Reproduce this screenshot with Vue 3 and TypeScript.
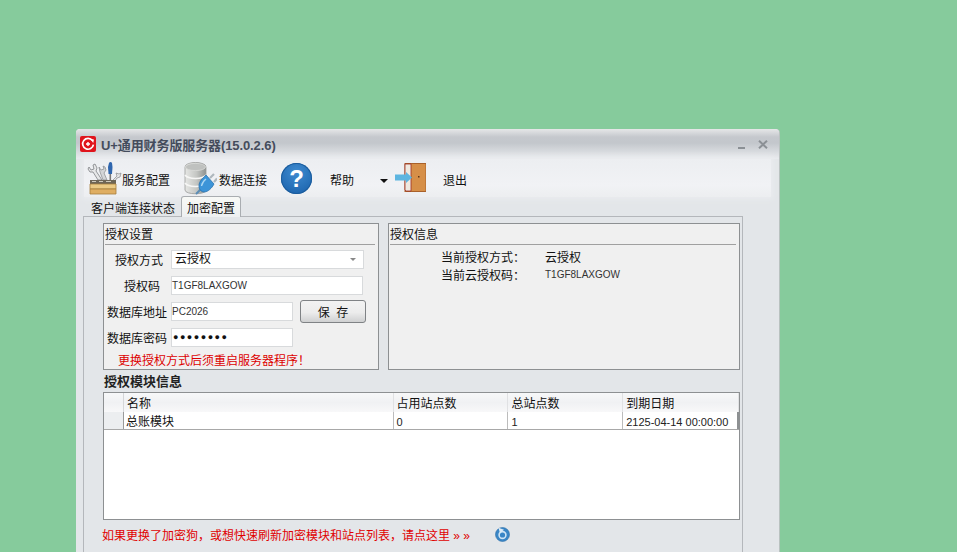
<script setup lang="ts">
interface Field {
  label: string
  value: string
}

const infoRows: Field[] = [
  { label: '当前授权方式：', value: '云授权' },
  { label: '当前云授权码：', value: 'T1GF8LAXGOW' }
]

const columns = [
  { title: '名称', width: 270 },
  { title: '占用站点数', width: 115 },
  { title: '总站点数', width: 115 },
  { title: '到期日期', width: 116 }
]

const rows = [['总账模块', '0', '1', '2125-04-14 00:00:00']]
</script>

<template>
  <div class="page">
    <div class="window">
      <div class="titlebar">
        <svg class="app-icon" viewBox="0 0 16 16">
          <rect width="16" height="16" rx="2" fill="#e0141c" />
          <path d="M12.4 4.6A5.4 5.4 0 1 0 13.4 8.6" fill="none" stroke="#fff" stroke-width="1.7" />
          <path d="M10.6 3.2 14 3.4 13.2 7z" fill="#fff" />
          <path d="M6 8h4M8 6v4" stroke="#fff" stroke-width="1.4" />
        </svg>
        <span class="title">U+通用财务版服务器(15.0.2.6)</span>
        <span class="win-min"></span>
        <svg class="win-close" viewBox="0 0 10 9">
          <path d="M1 .8l8 7.4M9 .8 1 8.2" stroke="#8b9095" stroke-width="2" />
        </svg>
      </div>

      <div class="toolbar">
        <button class="tool tool-service">
          <svg class="tool-icon" width="36" height="34" viewBox="0 0 36 34">
            <!-- 左侧扳手 -->
            <path d="M3 6 5 9 8 8 7 4 9 3 11 7 10 10 16 19H12L7 11 4 11 2 8z" fill="#e6e7e8" stroke="#7d8084" stroke-width=".8" />
            <path d="M13 6 15 9 18 8 17 5 19 6 20 9 18 12 21 19H17L14 11z" fill="#d3d5d7" stroke="#85888b" stroke-width=".7" />
            <!-- 螺丝刀 -->
            <path d="M22.5 13 22 6 23 2C23.6.6 25.4.6 26 2L26.5 6 26 13z" fill="#2f66ae" />
            <path d="M23.5 13h1.6v7h-1.6z" fill="#777" />
            <!-- 右侧扳手 -->
            <path d="M26 20 31 15 30 12 33 13 35 12 34 16 31 17 29 20z" fill="#e4e5e6" stroke="#85878a" stroke-width=".7" />
            <!-- 工具箱 -->
            <rect x="4" y="19" width="26" height="4" fill="#6e6656" />
            <path d="M6 20.5h4M13 20.5h4M20 20.5h5" stroke="#cfcabb" stroke-width="1.2" />
            <path d="M4 23h26v5H4z" fill="#eccb85" stroke="#a67f3d" stroke-width=".8" />
            <path d="M4 28h26v5H4z" fill="#dfae62" stroke="#a67f3d" stroke-width=".8" />
          </svg>
          <span>服务配置</span>
        </button>
        <button class="tool tool-db">
          <svg class="tool-icon" width="34" height="34" viewBox="0 0 34 34">
            <defs>
              <linearGradient id="dbFill" x1="0" x2="1" y1="0" y2="0">
                <stop offset="0" stop-color="#e6e7e5" />
                <stop offset=".55" stop-color="#c4c6c3" />
                <stop offset="1" stop-color="#8f9290" />
              </linearGradient>
            </defs>
            <path d="M2 6c0-6 21-6 21 0v23c0 5-21 5-21 0z" fill="url(#dbFill)" stroke="#9a9c9a" stroke-width=".8" />
            <ellipse cx="12.5" cy="6" rx="10" ry="3.6" fill="#bfc1bf" stroke="#d9dad8" stroke-width=".8" />
            <path d="M2 14c3 4.6 18 4.6 21 0M2 22c3 4.6 18 4.6 21 0" fill="none" stroke="#f6f6f5" stroke-width="1.5" />
            <path d="M13 33 18 28" stroke="#5c8db5" stroke-width="2" />
            <path d="M27 17 31 13M31 21 34 17.5" stroke="#aeb7bd" stroke-width="2.2" />
            <path d="M16 25C16 20 20 17 23 14L31 23C29 27 25 31 21 31 18 31 16 28 16 25z" fill="#3c94d8" stroke="#2a72ad" stroke-width=".8" />
            <path d="M18.5 25C19 22 21 19.5 23 18" fill="none" stroke="#a9d6f3" stroke-width="1.4" />
          </svg>
          <span>数据连接</span>
        </button>
        <button class="tool tool-help">
          <span class="help-icon">?</span>
          <span>帮助</span>
        </button>
        <span class="caret"></span>
        <button class="tool tool-exit">
          <svg class="tool-icon" width="32" height="30" viewBox="0 0 32 30">
            <rect x="11" y="0.5" width="21" height="28" fill="#d68f48" stroke="#a9612a" />
            <path d="M11 1h6v27h-5l-1-1z" fill="#efe9e0" stroke="#9c2b25" stroke-width=".8" />
            <rect x="24" y="13" width="1.5" height="1.5" fill="#5e3414" />
            <path d="M1 11.5h11V9l6 5.5-6 5.5v-2.5H1z" fill="#5db5e0" />
          </svg>
          <span>退出</span>
        </button>
      </div>

      <div class="tabs">
        <div class="tab">客户端连接状态</div>
        <div class="tab tab-active">加密配置</div>
      </div>

      <div class="panel">
        <div class="groups">
          <section class="group group-set">
            <h3>授权设置</h3>
            <div class="form-row row-mode">
              <label>授权方式</label>
              <div class="select">
                <span>云授权</span>
                <i></i>
              </div>
            </div>
            <div class="form-row row-code">
              <label>授权码</label>
              <div class="input input-full">T1GF8LAXGOW</div>
            </div>
            <div class="form-row row-addr">
              <label>数据库地址</label>
              <div class="input input-short">PC2026</div>
              <button class="save">保 存</button>
            </div>
            <div class="form-row row-pass">
              <label>数据库密码</label>
              <div class="input input-short input-dots">●●●●●●●●</div>
            </div>
            <p class="warn">更换授权方式后须重启服务器程序！</p>
          </section>

          <section class="group group-info">
            <h3>授权信息</h3>
            <dl>
              <div v-for="row in infoRows" :key="row.label" class="info-row">
                <dt>{{ row.label }}</dt>
                <dd>{{ row.value }}</dd>
              </div>
            </dl>
          </section>
        </div>

        <h4 class="section-title">授权模块信息</h4>
        <div class="grid">
          <div class="grid-row grid-head">
            <div class="gutter"></div>
            <div v-for="col in columns" :key="col.title" class="cell" :style="{ width: col.width + 'px' }">
              {{ col.title }}
            </div>
          </div>
          <div v-for="row in rows" :key="row[0]" class="grid-row grid-body">
            <div class="gutter"></div>
            <div
              v-for="(val, i) in row"
              :key="i"
              class="cell"
              :style="{ width: columns[i].width + 'px' }"
            >
              {{ val }}
            </div>
          </div>
        </div>

        <div class="footer">
          <span class="footer-text">如果更换了加密狗，或想快速刷新加密模块和站点列表，请点这里 » »</span>
          <svg class="refresh" width="15" height="15" viewBox="0 0 15 15">
            <circle cx="7.5" cy="7.5" r="7" fill="#3a86c6" stroke="#2b6ea8" stroke-width=".6" />
            <circle cx="7.5" cy="8" r="3.4" fill="none" stroke="#cfe4f4" stroke-width="1.6" />
            <path d="M3.5 .8 9 2.8 5 6.2z" fill="#dcebf7" />
          </svg>
        </div>
      </div>
    </div>
  </div>
</template>

<style>
html,
body {
  margin: 0;
  background: #86cb9c;
  overflow: hidden;
}
</style>

<style scoped>
.page {
  width: 957px;
  height: 552px;
  box-sizing: border-box;
  padding: 129px 0 0 76px;
  overflow: hidden;
  background: #86cb9c;
  font-family: "Liberation Sans", "Noto Sans CJK SC", sans-serif;
  font-size: 12px;
  color: #111;
}

.window {
  width: 703px;
  height: 423px;
  box-sizing: border-box;
  border-radius: 4px 4px 0 0;
  background: #e3e6e9;
  box-shadow: 1px 0 0 #b9c2c0;
}

.titlebar {
  height: 30px;
  display: flex;
  align-items: center;
  padding: 0 11px 0 4px;
  box-sizing: border-box;
  border-radius: 4px 4px 0 0;
  background: linear-gradient(#e6e7e8 0, #c5c8cd 8px, #c3c7cc 14px, #e9ebee 30px);
}

.app-icon {
  width: 16px;
  height: 16px;
  margin-right: 5px;
}

.title {
  flex: 1;
  font-size: 13px;
  font-weight: 700;
  letter-spacing: -0.1px;
  color: #444c5c;
  white-space: nowrap;
}

.win-min {
  width: 7px;
  height: 2px;
  background: #8b9095;
  margin: 7px 13px 0 0;
}

.win-close {
  width: 10px;
  height: 9px;
}

.toolbar {
  height: 38px;
  margin: 0 8px;
  display: flex;
  align-items: center;
  background: linear-gradient(#eceef1, #f1f2f5 70%, #eceef0);
  box-shadow: 0 0 5px 2px #eaecef;
}

.tool {
  display: flex;
  align-items: center;
  border: 0;
  padding: 0;
  background: none;
  font: inherit;
  font-size: 12px;
  color: #111;
}

.tool > span:last-child {
  padding-top: 3px;
}

.tool-service {
  margin-left: 2px;
  width: 97px;
}

.tool-db {
  width: 98px;
}

.tool-db span {
  margin-left: 2px;
}

.tool-help {
  width: 99px;
}

.help-icon {
  width: 31px;
  height: 31px;
  margin-right: 18px;
  border-radius: 50%;
  background: radial-gradient(circle at 50% 30%, #3f8bd0, #175ea8);
  box-shadow: inset 0 0 0 1px #1b5c9c;
  color: #fff;
  font-size: 24px;
  font-weight: 700;
  line-height: 31px;
  text-align: center;
}

.caret {
  width: 0;
  height: 0;
  margin-top: 5px;
  border: 4px solid transparent;
  border-top: 4px solid #111;
  border-bottom: 0;
}

.tool-exit {
  margin-left: 6px;
}

.tool-exit span {
  margin-left: 17px;
}

.tabs {
  height: 19px;
  display: flex;
  align-items: flex-end;
  padding-left: 12px;
  position: relative;
  z-index: 1;
}

.tab {
  height: 18px;
  line-height: 23px;
  padding: 0 3px;
  font-size: 12px;
  white-space: nowrap;
}

.tab-active {
  height: 20px;
  line-height: 24px;
  margin-left: 3px;
  padding: 0 5px;
  border: 1px solid #a9adb1;
  border-bottom: 0;
  border-radius: 3px 3px 0 0;
  background: linear-gradient(#f8f9f6, #eef0f1);
  margin-bottom: -1px;
}

.panel {
  margin-left: 7px;
  width: 660px;
  height: 336px;
  box-sizing: border-box;
  border: 1px solid #b4b7bb;
  border-bottom: 0;
  padding: 6px 0 0 19px;
}

.groups {
  display: flex;
  gap: 9px;
}

.group {
  height: 147px;
  box-sizing: border-box;
  border: 1px solid #8d9092;
  background: #f0f0f0;
}

.group h3 {
  margin: 0 3px 0 1px;
  height: 20px;
  border-bottom: 1px solid #a0a0a0;
  font-size: 12px;
  font-weight: 400;
  line-height: 22px;
  color: #111;
}

.group-set {
  width: 276px;
}

.group-info {
  width: 352px;
}

.form-row {
  display: flex;
  align-items: center;
  height: 19px;
}

.form-row label {
  font-size: 12px;
  white-space: nowrap;
  text-align: right;
}

.row-mode {
  margin-top: 5px;
}

.row-mode label {
  width: 59px;
  margin-right: 8px;
}

.row-code {
  margin-top: 7px;
}

.row-code label {
  width: 56px;
  margin-right: 11px;
}

.row-addr,
.row-pass {
  margin-top: 7px;
}

.row-addr label,
.row-pass label {
  width: 63px;
  margin-right: 4px;
}

.select,
.input {
  height: 19px;
  box-sizing: border-box;
  background: #fff;
  border: 1px solid #d8dadc;
  white-space: nowrap;
  font-family: "Liberation Sans", "Noto Sans CJK SC", sans-serif;
  line-height: 17px;
}

.select {
  width: 193px;
  display: flex;
  align-items: center;
  justify-content: space-between;
  padding: 0 7px 0 3px;
  font-size: 12px;
}

.select i {
  width: 0;
  height: 0;
  border: 3px solid transparent;
  border-top: 3px solid #888;
  border-bottom: 0;
}

.input {
  padding-left: 0;
  font-size: 10px;
  color: #333;
}

.input-full {
  width: 192px;
}

.input-short {
  width: 122px;
}

.input-dots {
  padding-left: 1px;
  font-size: 9px;
  letter-spacing: 1.5px;
  color: #111;
}

.save {
  width: 66px;
  height: 23px;
  margin: -2px 0 -2px 7px;
  padding: 0;
  border: 1px solid #7f8285;
  border-radius: 3px;
  background: linear-gradient(#f2f2f2, #ececec 55%, #cfd0d1);
  font: inherit;
  font-size: 12px;
  word-spacing: 3px;
  color: #111;
}

.warn {
  margin: 6px 0 0 14px;
  font-size: 12px;
  line-height: 16px;
  color: #dd0000;
}

.group-info dl {
  margin: 0;
  padding: 2px 0 0 52px;
}

.info-row {
  display: flex;
  height: 18px;
  align-items: center;
}

.info-row dt {
  width: 104px;
  font-size: 12px;
  white-space: nowrap;
}

.info-row dd {
  margin: 0;
  font-size: 12px;
}

.info-row:last-child dd {
  font-size: 10px;
  color: #333;
}

.section-title {
  margin: 3px 0 0 1px;
  height: 18px;
  font-size: 13px;
  line-height: 18px;
  color: #222;
}

.grid {
  width: 637px;
  height: 128px;
  box-sizing: border-box;
  margin-top: 1px;
  border: 1px solid #8d9092;
  background: #fff;
}

.grid-row {
  display: flex;
}

.grid-head {
  height: 19px;
  background: linear-gradient(#f7f8f9, #f0f1f3 50%, #f8f8f9);
}

.grid-body {
  height: 18px;
  border-bottom: 1px solid #a8a8a8;
  box-sizing: border-box;
}

.gutter {
  width: 20px;
  background: #eceef0;
  border-right: 1px solid #9a9a9a;
  box-sizing: border-box;
  flex: none;
}

.grid-head .gutter {
  background: none;
  border-right-color: #d5d6d8;
}

.cell {
  box-sizing: border-box;
  padding-left: 2px;
  padding-top: 1px;
  border-right: 1px solid #bcbcbc;
  white-space: nowrap;
  overflow: hidden;
  font-size: 12px;
  line-height: 18px;
}

.grid-head .cell {
  padding-left: 3px;
  padding-top: 0;
  line-height: 22px;
  border-right-color: #e0e1e3;
}

.grid-body .cell:nth-child(n + 3) {
  font-size: 11px;
  color: #222;
  padding-left: 3px;
}

.grid-body .cell:last-child {
  border-right: 2px solid #8d9092;
}

.footer {
  display: flex;
  align-items: center;
  height: 28px;
  margin-left: -1px;
}

.footer-text {
  width: 393px;
  font-size: 12px;
  color: #e00000;
  white-space: nowrap;
}

.refresh {
  flex: none;
}
</style>
